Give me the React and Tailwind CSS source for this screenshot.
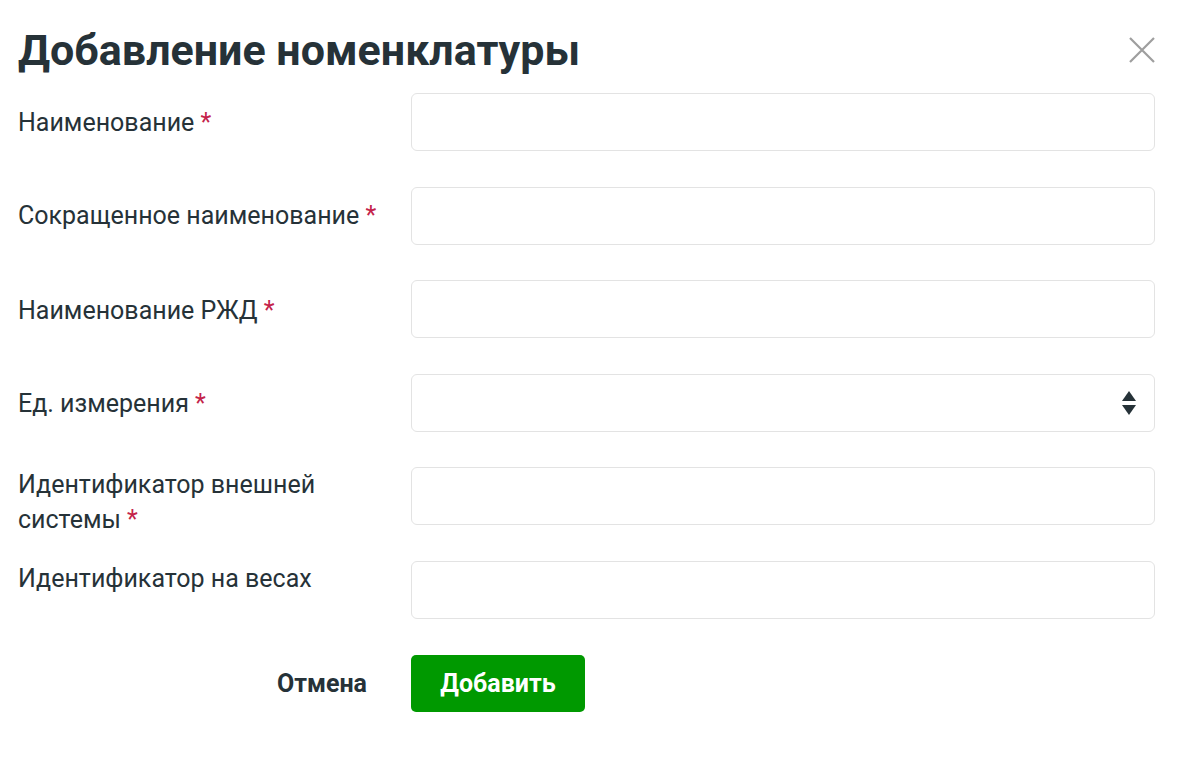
import { useState } from "react";

const fields = [
  { label: "Наименование", required: true, pad: "pt-[12px]" },
  { label: "Сокращенное наименование", required: true, pad: "pt-[11px]" },
  { label: "Наименование РЖД", required: true, pad: "pt-[13px]" },
  { label: "Ед. измерения", required: true, pad: "pt-[12px]", select: true },
  { label: "Идентификатор внешней системы", required: true, pad: "pt-0" },
  { label: "Идентификатор на весах", required: false, pad: "pt-0" },
];

function SelectArrows() {
  return (
    <svg width="16" height="26" viewBox="0 0 16 26" className="text-[#263238]">
      <path d="M8 1 L15 11 L1 11 Z" fill="currentColor" />
      <path d="M1 15 L15 15 L8 25 Z" fill="currentColor" />
    </svg>
  );
}

export default function App() {
  const [values, setValues] = useState({});

  return (
    <div
      className="w-[1181px] h-[771px] bg-white text-[#263238] pl-[18px] pr-[26px] pt-[26px]"
      style={{ fontFamily: "Roboto, 'Liberation Sans', sans-serif" }}
    >
      {/* Header */}
      <div className="flex items-center justify-between h-[48px]">
        <h1 className="text-[43px] leading-[48px] font-bold">Добавление номенклатуры</h1>
        <button className="w-[26px] h-[26px] flex items-center justify-center">
          <svg width="26" height="26" viewBox="0 0 26 26">
            <path d="M1 1 L25 25 M25 1 L1 25" stroke="#9e9e9e" strokeWidth="2.2" />
          </svg>
        </button>
      </div>

      {/* Form */}
      <div className="mt-[19px] flex flex-col gap-[35.6px]">
        {fields.map((f, i) => (
          <div key={i} className="flex items-start h-[58px]">
            <div className={`w-[393px] pr-4 text-[25px] leading-[35px] ${f.pad}`}>
              {f.label}
              {f.required && <span className="text-[#c4234a]"> *</span>}
            </div>
            <div className="relative flex-1">
              <input
                className="w-full h-[58px] border border-[#e3e3e3] rounded-[6px] px-4 text-[22px] outline-none"
                value={values[i] || ""}
                onChange={(e) => setValues({ ...values, [i]: e.target.value })}
              />
              {f.select && (
                <div className="absolute right-[18px] top-[16px]">
                  <SelectArrows />
                </div>
              )}
            </div>
          </div>
        ))}
      </div>

      {/* Actions */}
      <div className="flex items-center mt-[36px]">
        <div className="w-[393px] flex justify-end pr-[44px]">
          <button className="text-[25px] font-bold">Отмена</button>
        </div>
        <button className="h-[57px] w-[174px] bg-[#009900] rounded-[5px] text-white text-[25px] font-bold">
          Добавить
        </button>
      </div>
    </div>
  );
}
